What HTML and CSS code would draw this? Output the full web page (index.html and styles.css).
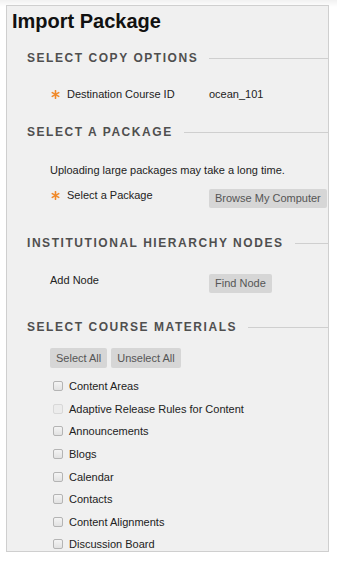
FILE: index.html
```html
<!DOCTYPE html>
<html lang="en">

<head>
  <meta charset="UTF-8">
  <meta name="viewport" content="width=device-width, initial-scale=1.0">
  <title>Import Package</title>
  <link rel="stylesheet" href="styles.css">
</head>

<body>
  <div class="panel">
    <h1 class="page-title">Import Package</h1>

    <h2 class="step-title step-first">Select Copy Options</h2>
    <div class="field-row row-first">
      <div class="label"><span class="req"><svg viewBox="0 0 10 10" width="9" height="9"><g stroke="#f0892a" stroke-width="1.8" stroke-linecap="round"><line x1="5" y1="0.8" x2="5" y2="9.2"/><line x1="1.4" y1="2.9" x2="8.6" y2="7.1"/><line x1="1.4" y1="7.1" x2="8.6" y2="2.9"/></g></svg></span>Destination Course ID</div>
      <div class="value">ocean_101</div>
    </div>

    <h2 class="step-title step-package">Select a Package</h2>
    <p class="note">Uploading large packages may take a long time.</p>
    <div class="field-row row-tight">
      <div class="label"><span class="req"><svg viewBox="0 0 10 10" width="9" height="9"><g stroke="#f0892a" stroke-width="1.8" stroke-linecap="round"><line x1="5" y1="0.8" x2="5" y2="9.2"/><line x1="1.4" y1="2.9" x2="8.6" y2="7.1"/><line x1="1.4" y1="7.1" x2="8.6" y2="2.9"/></g></svg></span>Select a Package</div>
      <div class="value"><button class="btn">Browse My Computer</button></div>
    </div>

    <h2 class="step-title step-nodes">Institutional Hierarchy Nodes</h2>
    <div class="field-row row-node">
      <div class="label">Add Node</div>
      <div class="value"><button class="btn">Find Node</button></div>
    </div>

    <h2 class="step-title step-materials">Select Course Materials</h2>
    <div class="btn-group">
      <button class="btn">Select All</button>
      <button class="btn">Unselect All</button>
    </div>
    <ul class="materials">
      <li><input type="checkbox">Content Areas</li>
      <li><input type="checkbox" disabled>Adaptive Release Rules for Content</li>
      <li><input type="checkbox">Announcements</li>
      <li><input type="checkbox">Blogs</li>
      <li><input type="checkbox">Calendar</li>
      <li><input type="checkbox">Contacts</li>
      <li><input type="checkbox">Content Alignments</li>
      <li><input type="checkbox">Discussion Board</li>
    </ul>
  </div>
</body>

</html>
```

FILE: styles.css
```css
body,
html {
  margin: 0;
  height: 100%;
  font-family: "Liberation Sans", Arial, sans-serif;
  color: #222;
}

body {
  background: linear-gradient(#f1f1f1, #fff 7px);
  padding-top: 5px;
  box-sizing: border-box;
}

.panel {
  margin-left: 6px;
  width: 323px;
  height: 547px;
  box-sizing: border-box;
  background-color: #f0f0f0;
  border: 1px solid #cfcfcf;
  overflow: hidden;
}

.page-title {
  margin: 0;
  padding-left: 5px;
  font-size: 20px;
  line-height: 30px;
  font-weight: bold;
  color: #111;
}

.step-title {
  display: flex;
  align-items: center;
  margin: 20px 0 0;
  padding-left: 20px;
  font-size: 12px;
  line-height: 16px;
  font-weight: bold;
  letter-spacing: 1.55px;
  text-transform: uppercase;
  color: #4f4f4f;
}

.step-title::after {
  content: "";
  flex: 1;
  height: 1px;
  margin-left: 11px;
  background-color: #cfcfcf;
}

.step-first {
  margin-top: 14px;
}

.step-nodes {
  margin-top: 27px;
}

.step-materials {
  margin-top: 26px;
}

.field-row {
  display: flex;
  padding-left: 43px;
  font-size: 11px;
  line-height: 20px;
}

.row-first {
  margin-top: 18px;
}

.row-tight {
  margin-top: 5px;
}

.row-node {
  margin-top: 19px;
}

.label {
  display: flex;
  align-items: center;
  width: 159px;
  height: 20px;
}

.req {
  display: inline-flex;
  width: 16px;
  padding-left: 1px;
}

.value .btn {
  margin-top: 4px;
}

.note {
  margin: 20px 0 0;
  padding-left: 43px;
  font-size: 11px;
  line-height: 20px;
}

.btn {
  display: inline-block;
  height: 19px;
  padding: 0 6px;
  border: none;
  border-radius: 2px;
  background-color: #d6d6d6;
  color: #555;
  font-family: "Liberation Sans", Arial, sans-serif;
  font-size: 11px;
  line-height: 19px;
  white-space: nowrap;
}

.btn-group {
  display: flex;
  gap: 4px;
  margin-top: 13px;
  padding-left: 43px;
}

.btn-group .btn {
  height: 20px;
  line-height: 20px;
}

.materials {
  list-style: none;
  margin: 7px 0 0;
  padding: 0 0 0 46px;
}

.materials li {
  display: flex;
  align-items: center;
  height: 22.6px;
  font-size: 11px;
}

.materials input {
  appearance: none;
  width: 10px;
  height: 10px;
  margin: 0 6px 0 0;
  border: 1px solid #b4b4b4;
  border-radius: 2px;
  background: linear-gradient(#f4f4f4, #e2e2e2);
  box-sizing: border-box;
}

.materials input:disabled {
  border-color: #d8d8d8;
  background: #ececec;
}
```
